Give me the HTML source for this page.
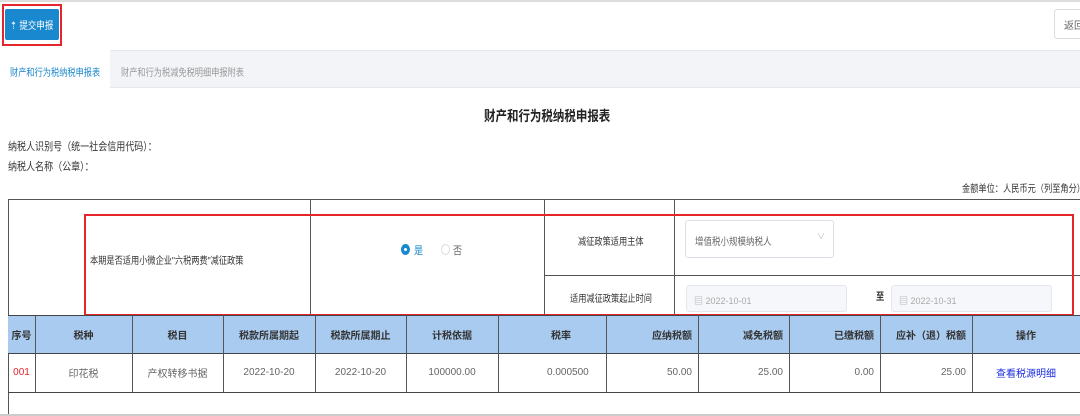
<!DOCTYPE html><html><head><meta charset="utf-8"><style>
*{margin:0;padding:0;box-sizing:border-box}
body{width:1080px;height:416px;overflow:hidden;background:#fff;font-family:"Liberation Sans","Noto Sans CJK SC",sans-serif;font-size:11px;color:#333;position:relative}
.a{position:absolute}
.t{position:absolute;white-space:nowrap;transform:scaleX(.82);transform-origin:left top}
.hl{position:absolute;height:1px;background:#555}
.vl{position:absolute;width:1px;background:#555}
.hd{position:absolute;top:315px;height:38px;background:#a9cbef}
.c{position:absolute;display:flex;align-items:center;justify-content:center;font-size:10px;white-space:nowrap}
</style></head><body>
<div class="a" style="left:0;top:0;width:1080px;height:2px;background:#ddd"></div>
<div class="a" style="left:2px;top:4px;width:60px;height:42px;border:2px solid #e5252a"></div>
<div class="a" style="left:5px;top:9px;width:54px;height:31px;background:#1a88cf;border-radius:2px;color:#fff;font-size:10px;display:flex;align-items:center;justify-content:center"><span style="transform:scaleX(.85);white-space:nowrap">⇡ 提交申报</span></div>
<div class="a" style="left:1054px;top:9px;width:40px;height:30px;border:1px solid #ddd;border-radius:3px;font-size:10px;color:#666;padding:7px 0 0 9px">返回</div>
<div class="a" style="left:0;top:50px;width:1080px;height:38px;background:#f3f4f7;border-top:1px solid #e4e7ed;border-bottom:1px solid #e4e7ed"></div>
<div class="a" style="left:0;top:50px;width:110px;height:39px;background:#fff"></div>
<div class="t" style="left:10px;top:64px;color:#1a88cf;font-size:10px">财产和行为税纳税申报表</div>
<div class="t" style="left:121px;top:64px;color:#999;font-size:10px">财产和行为税减免税明细申报附表</div>
<div class="t" style="left:484px;top:106px;font-size:14px;font-weight:bold;color:#222">财产和行为税纳税申报表</div>
<div class="t" style="left:8px;top:138px;font-size:11px">纳税人识别号（统一社会信用代码）：</div>
<div class="t" style="left:8px;top:158px;font-size:11px">纳税人名称（公章）：</div>
<div class="t" style="left:962px;top:180px;font-size:10px">金额单位：人民币元（列至角分）</div>
<!-- table lines -->
<div class="hl" style="left:8px;top:199px;width:1072px"></div>
<div class="vl" style="left:8px;top:199px;height:217px"></div>
<div class="vl" style="left:310px;top:199px;height:116px"></div>
<div class="vl" style="left:544px;top:199px;height:116px"></div>
<div class="vl" style="left:674px;top:199px;height:116px"></div>
<div class="hl" style="left:544px;top:275px;width:536px"></div>
<div class="t" style="left:90px;top:252px;font-size:10px">本期是否适用小微企业"六税两费"减征政策</div>
<div class="a" style="left:401px;top:244px;width:9px;height:11px;border-radius:50%;background:#1a88cf"></div>
<div class="a" style="left:404px;top:248px;width:3px;height:3px;border-radius:50%;background:#fff"></div>
<div class="t" style="left:414px;top:242px;color:#1a88cf;font-size:11px">是</div>
<div class="a" style="left:441px;top:244px;width:9px;height:11px;border-radius:50%;border:1px solid #ddd"></div>
<div class="t" style="left:453px;top:242px;color:#666;font-size:11px">否</div>
<div class="t" style="left:578px;top:233px;font-size:10px">减征政策适用主体</div>
<div class="t" style="left:570px;top:290px;font-size:10px">适用减征政策起止时间</div>
<div class="a" style="left:685px;top:220px;width:149px;height:38px;border:1px solid #dcdfe6;border-radius:3px;font-size:10px;color:#666;padding:12px 0 0 9px"><span style="display:inline-block;transform:scaleX(.85);transform-origin:left;white-space:nowrap">增值税小规模纳税人</span><span style="position:absolute;right:8px;top:10px;color:#bbb;font-size:8px">∨</span></div>
<div class="a" style="left:686px;top:285px;width:161px;height:27px;background:#f5f7fa;border:1px solid #e4e7ed;border-radius:3px;font-size:9px;color:#aaa;padding:8px 0 0 7px">▤ 2022-10-01</div>
<div class="t" style="left:876px;top:288px;font-size:10px;font-weight:bold">至</div>
<div class="a" style="left:891px;top:285px;width:161px;height:27px;background:#f5f7fa;border:1px solid #e4e7ed;border-radius:3px;font-size:9px;color:#aaa;padding:8px 0 0 7px">▤ 2022-10-31</div>
<div class="a" style="left:84px;top:214px;width:990px;height:102px;border:2px solid #e5252a"></div>
<!-- header -->
<div class="hd" style="left:8px;width:1072px"></div>
<div class="hl" style="left:8px;top:315px;width:1072px;background:#444"></div>
<div class="hl" style="left:8px;top:353px;width:1072px;background:#444"></div>
<div class="hl" style="left:8px;top:392px;width:1072px;background:#444"></div>
<div class="hl" style="left:0;top:414px;width:1080px;background:#ccc;height:2px"></div>
<div class="vl" style="left:35px;top:315px;height:77px"></div>
<div class="vl" style="left:132px;top:315px;height:77px"></div>
<div class="vl" style="left:223px;top:315px;height:77px"></div>
<div class="vl" style="left:315px;top:315px;height:77px"></div>
<div class="vl" style="left:406px;top:315px;height:77px"></div>
<div class="vl" style="left:498px;top:315px;height:77px"></div>
<div class="vl" style="left:606px;top:315px;height:77px"></div>
<div class="vl" style="left:698px;top:315px;height:77px"></div>
<div class="vl" style="left:789px;top:315px;height:77px"></div>
<div class="vl" style="left:880px;top:315px;height:77px"></div>
<div class="vl" style="left:972px;top:315px;height:77px"></div>
<div class="c" style="left:8px;top:315px;width:27px;height:38px;font-weight:bold">序号</div>
<div class="c" style="left:35px;top:315px;width:97px;height:38px;font-weight:bold">税种</div>
<div class="c" style="left:132px;top:315px;width:91px;height:38px;font-weight:bold">税目</div>
<div class="c" style="left:223px;top:315px;width:92px;height:38px;font-weight:bold">税款所属期起</div>
<div class="c" style="left:315px;top:315px;width:91px;height:38px;font-weight:bold">税款所属期止</div>
<div class="c" style="left:406px;top:315px;width:92px;height:38px;font-weight:bold">计税依据</div>
<div class="c" style="left:498px;top:315px;width:108px;height:38px;font-weight:bold;justify-content:flex-start;padding-left:53px">税率</div>
<div class="c" style="left:606px;top:315px;width:92px;height:38px;font-weight:bold;justify-content:flex-end;padding-right:6px">应纳税额</div>
<div class="c" style="left:698px;top:315px;width:91px;height:38px;font-weight:bold;justify-content:flex-end;padding-right:6px">减免税额</div>
<div class="c" style="left:789px;top:315px;width:91px;height:38px;font-weight:bold;justify-content:flex-end;padding-right:6px">已缴税额</div>
<div class="c" style="left:880px;top:315px;width:92px;height:38px;font-weight:bold;justify-content:flex-end;padding-right:6px">应补（退）税额</div>
<div class="c" style="left:972px;top:315px;width:108px;height:38px;font-weight:bold">操作</div>
<div class="c" style="left:8px;top:353px;width:27px;height:39px;color:#e5252a">001</div>
<div class="c" style="left:35px;top:353px;width:97px;height:39px;color:#666">印花税</div>
<div class="c" style="left:132px;top:353px;width:91px;height:39px;color:#666">产权转移书据</div>
<div class="c" style="left:223px;top:353px;width:92px;height:39px;color:#666">2022-10-20</div>
<div class="c" style="left:315px;top:353px;width:91px;height:39px;color:#666">2022-10-20</div>
<div class="c" style="left:406px;top:353px;width:92px;height:39px;color:#666">100000.00</div>
<div class="c" style="left:498px;top:353px;width:108px;height:39px;color:#666;justify-content:flex-start;padding-left:49px">0.000500</div>
<div class="c" style="left:606px;top:353px;width:92px;height:39px;color:#666;justify-content:flex-end;padding-right:6px">50.00</div>
<div class="c" style="left:698px;top:353px;width:91px;height:39px;color:#666;justify-content:flex-end;padding-right:6px">25.00</div>
<div class="c" style="left:789px;top:353px;width:91px;height:39px;color:#666;justify-content:flex-end;padding-right:6px">0.00</div>
<div class="c" style="left:880px;top:353px;width:92px;height:39px;color:#666;justify-content:flex-end;padding-right:6px">25.00</div>
<div class="c" style="left:972px;top:353px;width:108px;height:39px;color:#1a2be0">查看税源明细</div>
</body></html>
